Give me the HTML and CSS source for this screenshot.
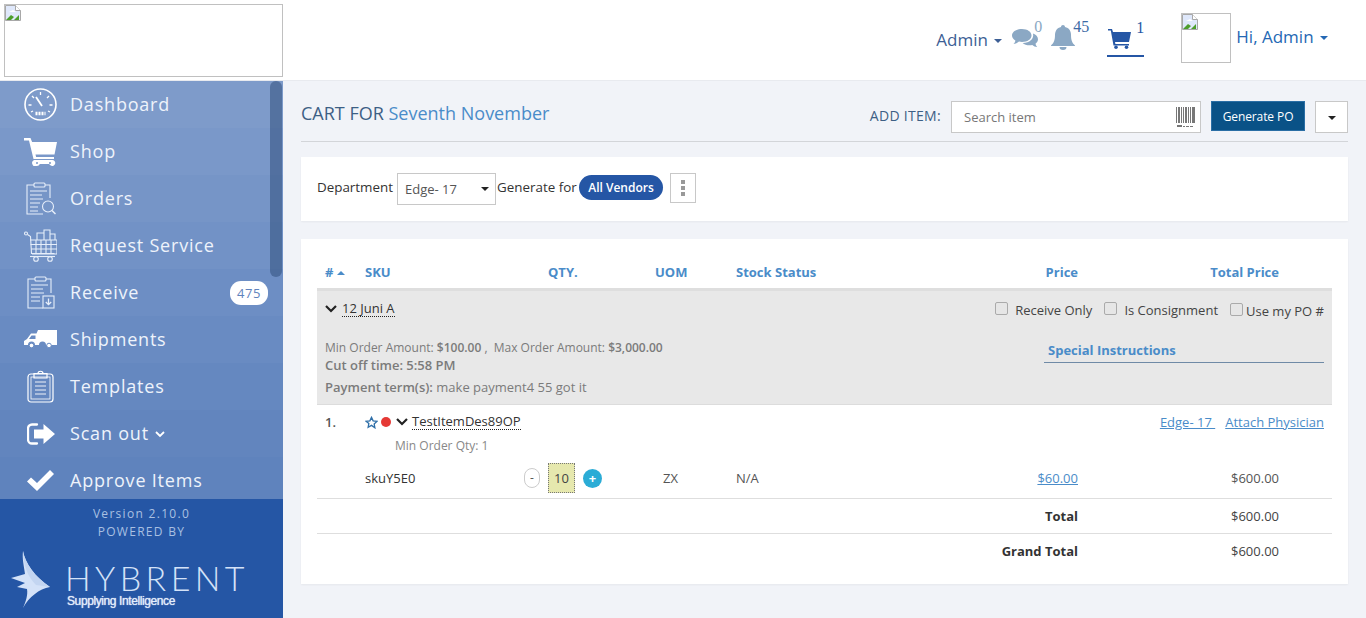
FILE: index.html
```html
<!DOCTYPE html>
<html lang="en">
  <head>
    <meta charset="UTF-8" />
    <title>Cart - Hybrent</title>
    <link rel="stylesheet" href="styles.css">
  </head>
  <body>
    <svg class="defs" width="0" height="0">
      <defs>
        <symbol id="broken" viewBox="0 0 16 16">
          <path d="M.5.5h10l5 5v10H.5z" fill="#dfe8fb" stroke="#a8a8a8"/>
          <path d="M10.5.5v5h5" fill="#fff" stroke="#a8a8a8"/>
          <path d="M1 15l5-5 3 2-3 3z" fill="#4d9e2c"/>
          <path d="M9 15l5-5v5z" fill="#4d9e2c"/>
          <path d="M4 7l4-2 3 2z" fill="#fff"/>
        </symbol>
      </defs>
    </svg>

    <header class="topbar">
      <div class="logo-box"><svg class="broken"><use href="#broken"/></svg></div>
      <div class="top-right">
        <a class="top-link admin-link">Admin <i class="caret"></i></a>
        <span class="top-icon chat-icon">
          <svg width="26" height="21" viewBox="0 0 26 21"><path d="M10 1c5.500 0 9.500 2.900 9.500 6.500S15.500 14 10 14c-1 0-2-.1-3-.4C5.500 15 3.500 15.700 1.500 16c1-1 1.700-2.200 1.900-3.600C1.300 11.200 0 9.500 0 7.500 0 3.900 4.500 1 10 1z" fill="#8ba8c4"/><path d="M21 5.500c3 1 5 3.200 5 5.800 0 1.800-1 3.400-2.500 4.500.2 1.300.8 2.400 1.700 3.300-1.900-.2-3.600-.9-4.900-2.100-.9.200-1.800.3-2.800.3-2.800 0-5.300-.9-6.900-2.400 6.400.2 11.700-3.600 10.400-9.400z" fill="#8ba8c4"/></svg>
          <span class="count">0</span>
        </span>
        <span class="top-icon bell-icon">
          <svg width="24" height="25" viewBox="0 0 24 25"><path d="M12 0c1.100 0 2 .9 2 2 4 .8 6 4 6 8 0 6 1.500 8 4 10.500V21H0v-.5C2.500 18 4 16 4 10c0-4 2-7.200 6-8 0-1.100.9-2 2-2z" fill="#8ba8c4"/><path d="M8.500 22h7a3.500 3 0 0 1-7 0z" fill="#8ba8c4"/></svg>
          <span class="count">45</span>
        </span>
        <span class="top-icon cart-link">
          <svg width="23" height="20" viewBox="0 0 23 20"><path d="M0 0h4l1 3h18l-2 10H7l.4 2H21v1.500H5.500L2.800 1.500H0z" fill="#2556a5"/><circle cx="8" cy="18.200" r="1.800" fill="#2556a5"/><circle cx="18.500" cy="18.200" r="1.800" fill="#2556a5"/></svg>
          <span class="count">1</span>
        </span>
        <div class="avatar-box"><svg class="broken"><use href="#broken"/></svg></div>
        <a class="top-link hi-link">Hi, Admin <i class="caret"></i></a>
      </div>
    </header>

    <div class="layout">
      <aside class="sidebar">
        <nav class="side-nav">
          <a class="nav-item">
            <span class="nav-icon"><svg width="33" height="33" viewBox="0 0 33 33" fill="none" stroke="#fff"><circle cx="16.500" cy="16.500" r="15.500" stroke-width="1.600"/><path d="M16.500 4v3M8 8l2 2M25 8l-2 2M4.500 17h3M25.500 17h3M7 24l2-1M26 24l-2-1" stroke-width="1.300"/><path d="M12 9l6 9" stroke-width="1.800"/><path d="M11.500 25.500h10" stroke-width="3.500" stroke-dasharray="2 1"/></svg></span>
            <span class="nav-label">Dashboard</span>
          </a>
          <a class="nav-item">
            <span class="nav-icon"><svg width="33" height="28" viewBox="0 0 33 28" fill="#fff"><path d="M0 0h6.500l1.600 4H33l-2.500 12.500H11.500l.6 2.500H30v2H9.500L5 2.500H0z"/><path d="M10 22h18a3 3 0 1 1-1.200 5.600c-.8-.4-1.300-1-1.600-1.600h-9.400c-.5 1.200-1.600 2-2.800 2a3 3 0 0 1-3-6zm3 2a1 1 0 1 0 0 2 1 1 0 0 0 0-2zm13 0a1 1 0 1 0 0 2 1 1 0 0 0 0-2z"/></svg></span>
            <span class="nav-label">Shop</span>
          </a>
          <a class="nav-item">
            <span class="nav-icon"><svg width="31" height="33" viewBox="0 0 31 33" fill="none" stroke="#e6eefa" stroke-width="1.100"><path d="M9 3H2v29h16M20 3h5v13"/><rect x="9" y="1" width="11" height="4" rx="1"/><path d="M5 9h17M5 13h12M5 17h13M5 21h10M5 25h8M5 29h8"/><circle cx="23" cy="24.500" r="5.500"/><path d="M27 28.500l3.500 3.500" stroke-width="1.500"/></svg></span>
            <span class="nav-label">Orders</span>
          </a>
          <a class="nav-item">
            <span class="nav-icon"><svg width="33" height="33" viewBox="0 0 33 33" fill="none" stroke="#e6eefa" stroke-width="1.100"><circle cx="2" cy="4.500" r="1.500"/><path d="M3.500 5.500l3 2 1 17h23"/><path d="M6 11h27v14H8M12 11v14M17 11v14M22 11v14M27 11v14M6.500 15.500H33M7 20H33"/><path d="M13 11V4h7v7M20 11V1h6v10M26 11V5h5v6"/><circle cx="12" cy="30" r="2.300"/><circle cx="26" cy="30" r="2.300"/><path d="M6 27.500h25"/></svg></span>
            <span class="nav-label">Request Service</span>
          </a>
          <a class="nav-item">
            <span class="nav-icon"><svg width="29" height="33" viewBox="0 0 29 33" fill="none" stroke="#e6eefa" stroke-width="1.100"><path d="M9 3H2v29h15M20 3h5v14"/><rect x="9" y="1" width="11" height="4" rx="1"/><path d="M5 9h17M5 13h12M5 17h13M5 21h9M5 25h9"/><rect x="17" y="20" width="11" height="12"/><path d="M22.500 22.500v6M19.800 26l2.700 2.700 2.700-2.700" stroke-width="1.300"/></svg></span>
            <span class="nav-label">Receive</span>
            <span class="nav-badge">475</span>
          </a>
          <a class="nav-item">
            <span class="nav-icon"><svg width="33" height="19" viewBox="0 0 33 19"><path d="M14 0h19v15H22a3.500 3.500 0 0 0-7 0h-4a3.500 3.500 0 0 0-7 0H0v-4l3-2 4-5.500h5.500zM7.500 5.500L5 9h6.500V5.500z" fill="#fff" fill-rule="evenodd"/><circle cx="7.500" cy="15.500" r="2.300" fill="#fff" stroke="#698bc2"/><circle cx="25" cy="15.500" r="2.300" fill="#fff" stroke="#698bc2"/></svg></span>
            <span class="nav-label">Shipments</span>
          </a>
          <a class="nav-item">
            <span class="nav-icon"><svg width="27" height="33" viewBox="0 0 27 33" fill="none" stroke="#fff" stroke-width="1.200"><rect x="1" y="4" width="25" height="28" rx="3"/><rect x="4" y="7" width="19" height="22" stroke-width=".8"/><path d="M7 3.500h13V8H7zM11 3.500c0-3 5-3 5 0"/><path d="M8 12h11M8 16h11M8 20h11M8 24h11" stroke-width=".9"/></svg></span>
            <span class="nav-label">Templates</span>
          </a>
          <a class="nav-item">
            <span class="nav-icon"><svg width="28" height="22" viewBox="0 0 28 22" fill="#fff"><path d="M10 1.500H5a4 4 0 0 0-4 4v11a4 4 0 0 0 4 4h5" fill="none" stroke="#fff" stroke-width="2.300" stroke-linecap="round"/><path d="M16.500 1L28 11 16.500 21v-5.500H7v-9h9.500z"/></svg></span>
            <span class="nav-label">Scan out</span>
            <svg class="nav-chevron" width="10" height="7" viewBox="0 0 10 7" fill="none" stroke="#fff" stroke-width="1.800"><path d="M1 1l4 4 4-4"/></svg>
          </a>
          <a class="nav-item">
            <span class="nav-icon"><svg width="27" height="21" viewBox="0 0 27 21" fill="#fff"><path d="M0 11.500l4-4 6 5.500L23 0l4 4L10 21z"/></svg></span>
            <span class="nav-label">Approve Items</span>
          </a>
        </nav>
        <div class="side-scroll"></div>
        <div class="side-footer">
          <div class="version">Version 2.10.0</div>
          <div class="powered">POWERED BY</div>
          <div class="brand">
            <svg class="brand-mark" width="39" height="57" viewBox="0 0 39 57">
              <path d="M12 0c2 12 12 26 27 36-11 2-21 10-27 21 3-7 5-13 4-19L6 36l8-4L0 27l14-4C13 15 11 8 12 0z" fill="#d4e2f8"/>
              <path d="M12 0c2 12 12 26 27 36l-14-2C17 26 12 14 12 0z" fill="#c3d5f1"/>
            </svg>
            <div class="brand-text">
              <div class="brand-name">HYBRENT</div>
              <div class="brand-sub">Supplying Intelligence</div>
            </div>
          </div>
        </div>
      </aside>

      <main class="content">
        <div class="page-head">
          <h1 class="page-title">CART FOR <span>Seventh November</span></h1>
          <div class="head-actions">
            <label class="add-label">ADD ITEM:</label>
            <div class="search-box">
              <input class="search-input" type="text" placeholder="Search item">
              <svg width="19" height="20" viewBox="0 0 19 20" fill="#777"><path d="M0 0h1v16H0zM2 0h2v16H2zM5 0h1v16H5zM7 0h1v16H7zM9 0h2v16H9zM12 0h1v16h-1zM14 0h1v16h-1zM16 0h3v16h-3zM1 18h5v2H1zM7 19h2v1H7zM10 19h3v1h-3zM14 19h3v1h-3z"/></svg>
            </div>
            <button class="po-btn">Generate PO</button>
            <button class="po-caret"><i class="caret dark"></i></button>
          </div>
        </div>

        <section class="panel filter-panel">
          <span>Department</span>
          <div class="select-box">Edge- 17 <i class="caret dark"></i></div>
          <span>Generate for</span>
          <span class="pill">All Vendors</span>
          <span class="dots"><i></i><i></i><i></i></span>
        </section>

        <section class="panel cart-panel">
          <div class="grid-row cart-head">
            <span># <i class="caret up"></i></span>
            <span>SKU</span>
            <span>QTY.</span>
            <span>UOM</span>
            <span>Stock Status</span>
            <span class="right">Price</span>
            <span class="right">Total Price</span>
          </div>

          <div class="vendor-block">
            <div class="vendor-top">
              <div class="vendor-name">
                <svg class="chev" width="12" height="8" viewBox="0 0 12 8" fill="none" stroke="#222" stroke-width="2.200"><path d="M1 1l5 5 5-5"/></svg>
                <span class="dotted">12 Juni A</span>
              </div>
              <div class="vendor-checks">
                <label><input type="checkbox"> Receive Only</label>
                <label><input type="checkbox"> Is Consignment</label>
                <label class="tight"><input type="checkbox"> Use my PO #</label>
              </div>
            </div>
            <div class="vendor-bottom">
              <div class="vendor-info">
                <div class="amounts">Min Order Amount: <b>$100.00</b> ,&nbsp; Max Order Amount: <b>$3,000.00</b></div>
                <div class="cutoff">Cut off time: 5:58 PM</div>
                <div class="terms"><b>Payment term(s):</b> make payment4 55 got it</div>
              </div>
              <div class="special">Special Instructions</div>
            </div>
          </div>

          <div class="item-block">
            <div class="item-top">
              <span class="item-num">1.</span>
              <svg class="star" width="13" height="13" viewBox="0 0 24 24" fill="none" stroke="#2f6fa8" stroke-width="2.400"><path d="M12 2.500l3 6.500 7 .9-5.100 4.800 1.300 7L12 17.300l-6.200 3.400 1.300-7L2 9.900 9 9z"/></svg>
              <i class="red-dot"></i>
              <svg class="chev" width="12" height="8" viewBox="0 0 12 8" fill="none" stroke="#222" stroke-width="2.200"><path d="M1 1l5 5 5-5"/></svg>
              <span class="dotted">TestItemDes89OP</span>
              <span class="item-links"><a>Edge- 17&nbsp;</a><a>Attach Physician</a></span>
            </div>
            <div class="min-qty">Min Order Qty: 1</div>
            <div class="grid-row item-row">
              <span></span>
              <span>skuY5E0</span>
              <span class="qty-cell">
                <span class="qty-minus">-</span>
                <span class="qty-val">10</span>
                <span class="qty-plus">+</span>
              </span>
              <span class="uom">ZX</span>
              <span>N/A</span>
              <span class="right"><a>$60.00</a></span>
              <span class="right">$600.00</span>
            </div>
          </div>

          <div class="grid-row total-row">
            <b class="total-label">Total</b>
            <span class="right">$600.00</span>
          </div>
          <div class="grid-row total-row grand">
            <b class="total-label">Grand Total</b>
            <span class="right">$600.00</span>
          </div>
        </section>
      </main>
    </div>
  </body>
</html>
```

FILE: styles.css
```css
* {
  margin: 0;
  padding: 0;
  box-sizing: border-box;
}

body {
  font-family: "Open Sans", sans-serif;
  font-size: 13px;
  width: 100vw;
  height: 100vh;
  overflow: hidden;
  background: #f1f3f8;
  color: #333;
  display: flex;
  flex-direction: column;
}

.defs {
  position: absolute;
}

.broken {
  display: block;
  width: 16px;
  height: 16px;
}

.caret {
  display: inline-block;
  width: 0;
  height: 0;
  border-left: 4px solid transparent;
  border-right: 4px solid transparent;
  border-top: 4px solid currentColor;
  vertical-align: middle;
}

.caret.dark {
  color: #222;
}

.caret.up {
  border-top: 0;
  border-bottom: 4px solid currentColor;
}

/* header */
.topbar {
  height: 81px;
  flex: none;
  background: white;
  border-bottom: 1px solid #e8eaef;
  display: flex;
  align-items: flex-start;
  justify-content: space-between;
  padding: 4px 38px 0 4px;
}

.logo-box {
  width: 279px;
  height: 73px;
  border: 1px solid #c0c0c0;
}

.top-right {
  display: flex;
  align-items: flex-start;
}

.top-link {
  font-size: 17px;
  line-height: 22px;
  white-space: nowrap;
}

.top-link .caret {
  margin-left: 2px;
}

.admin-link {
  color: #3d5f95;
  margin-top: 25px;
  margin-right: 10px;
}

.hi-link {
  color: #2468b4;
  margin-top: 22px;
  margin-left: 5px;
}

.top-icon {
  position: relative;
  display: block;
}

.top-icon .count {
  position: absolute;
  font-family: "Liberation Serif", serif;
  font-size: 16px;
  line-height: 16px;
  color: #8ba8c4;
}

.chat-icon {
  margin-top: 24px;
  margin-right: 14px;
  width: 25px;
}

.chat-icon .count {
  left: 22px;
  top: -9px;
}

.bell-icon {
  margin-top: 21px;
  width: 24px;
  margin-right: 32px;
}

.bell-icon .count {
  left: 22px;
  top: -6px;
  color: #3d6aa6;
}

.cart-link {
  margin-top: 25px;
  width: 37px;
  height: 28px;
  border-bottom: 2px solid #2556a5;
  margin-right: 37px;
  padding-left: 1px;
}

.cart-link .count {
  left: 29px;
  top: -9px;
  color: #2556a5;
}

.avatar-box {
  width: 50px;
  height: 50px;
  margin-top: 9px;
  border: 1px solid #c0c0c0;
}

/* layout */
.layout {
  flex: 1;
  display: flex;
  min-height: 0;
}

.sidebar {
  position: relative;
  width: 283px;
  flex: none;
  display: flex;
  flex-direction: column;
  background: #2556a5;
}

.side-nav {
  flex: 1;
  min-height: 0;
  overflow: hidden;
}

.nav-item {
  height: 47px;
  display: flex;
  align-items: center;
  color: #eef3fb;
  font-size: 18px;
  letter-spacing: 0.8px;
  padding: 0 15px 0 24px;
  background: #7e9bca;
}

.nav-item:nth-child(2) { background: #7a98c9; }
.nav-item:nth-child(3) { background: #7695c7; }
.nav-item:nth-child(4) { background: #7292c6; }
.nav-item:nth-child(5) { background: #6d8ec4; }
.nav-item:nth-child(6) { background: #698bc2; }
.nav-item:nth-child(7) { background: #6588c0; }
.nav-item:nth-child(8) { background: #6285be; }
.nav-item:nth-child(9) { background: #5f83bd; }

.nav-icon {
  width: 33px;
  margin-right: 13px;
  display: flex;
  justify-content: center;
  flex: none;
}

.nav-icon svg {
  display: block;
}

.nav-label {
  margin-bottom: 1px;
}

.nav-badge {
  margin-left: auto;
  background: white;
  color: #5f83bd;
  font-size: 13px;
  line-height: 24px;
  width: 38px;
  text-align: center;
  border-radius: 11px;
  letter-spacing: 0.5px;
}

.nav-chevron {
  margin-left: 6px;
  margin-top: 2px;
}

.side-scroll {
  position: absolute;
  top: 0;
  left: 270px;
  width: 12px;
  height: 196px;
  border-radius: 6px;
  background: rgba(50, 80, 125, 0.55);
}

.side-footer {
  height: 119px;
  flex: none;
  background: #2556a5;
  padding-top: 6px;
  text-align: center;
  color: #a9c0e2;
  font-size: 12px;
  letter-spacing: 1.3px;
  line-height: 18px;
}

.brand {
  display: flex;
  align-items: flex-start;
  padding: 10px 0 0 11px;
  text-align: left;
}

.brand-mark {
  flex: none;
}

.brand-text {
  margin-left: 15px;
  margin-top: 13px;
}

.brand-name {
  font-family: Lato, sans-serif;
  font-weight: 300;
  font-size: 34px;
  line-height: 28px;
  letter-spacing: 4.4px;
  color: #d4e2f8;
}

.brand-sub {
  font-family: "Liberation Sans", sans-serif;
  font-size: 12px;
  line-height: 14px;
  letter-spacing: -0.4px;
  color: #e4edfb;
  text-shadow: 0 0 1px #e4edfb;
  margin: 2px 0 0 2px;
}

/* content */
.content {
  flex: 1;
  min-width: 0;
  padding: 0 18px;
}

.page-head {
  height: 61px;
  border-bottom: 1px solid #d3d5d9;
  display: flex;
  align-items: flex-start;
  justify-content: space-between;
  padding-top: 20px;
}

.page-title {
  font-size: 18px;
  font-weight: 400;
  line-height: 24px;
  color: #3d5f85;
}

.page-title span {
  color: #4a8cc9;
}

.head-actions {
  display: flex;
  align-items: flex-start;
}

.add-label {
  font-size: 14px;
  letter-spacing: 0.3px;
  color: #3d5f85;
  margin: 5px 10px 0 0;
}

.search-box {
  width: 250px;
  height: 32px;
  border: 1px solid #c8c8c8;
  background: white;
  display: flex;
  align-items: center;
  padding: 0 5px 0 12px;
  margin-right: 10px;
}

.search-input {
  flex: 1;
  min-width: 0;
  border: 0;
  outline: 0;
  background: none;
  font-family: inherit;
  font-size: 13px;
  color: #555;
}

.search-input::placeholder {
  color: #777;
}

.po-btn {
  width: 94px;
  height: 30px;
  background: #0a5287;
  border: 1px solid #2a6ea5;
  color: white;
  font-family: inherit;
  font-size: 12px;
  font-weight: 500;
  letter-spacing: -0.1px;
  margin-right: 10px;
}

.po-caret {
  width: 33px;
  height: 32px;
  background: white;
  border: 1px solid #c8c8c8;
}

.panel {
  background: white;
  box-shadow: 0 1px 2px rgba(0, 0, 0, 0.05);
}

.filter-panel {
  height: 64px;
  margin-top: 15px;
  display: flex;
  align-items: center;
  padding: 0 16px 4px;
  font-size: 13.4px;
  color: #333;
}

.select-box {
  width: 99px;
  height: 32px;
  border: 1px solid #c8c8c8;
  margin: 4px 1px 0 4px;
  display: flex;
  align-items: center;
  justify-content: space-between;
  padding: 0 6px 0 7px;
  color: #555;
  font-size: 13px;
}

.pill {
  background: #2556a5;
  color: white;
  font-size: 12px;
  font-weight: 600;
  line-height: 25px;
  padding: 0 9.5px;
  border-radius: 13px;
  margin: 0 7px 0 2px;
}

.dots {
  width: 26px;
  height: 30px;
  margin-top: 2px;
  border: 1px solid #c8c8c8;
  display: flex;
  flex-direction: column;
  align-items: center;
  justify-content: center;
  gap: 2px;
}

.dots i {
  width: 4px;
  height: 4px;
  background: #999;
}

.cart-panel {
  margin-top: 18px;
  height: 345px;
  padding: 16px;
}

.grid-row {
  display: grid;
  grid-template-columns: 40px 183px 107px 81px 200px 142px 201px 53px;
  padding-left: 8px;
}

.right {
  text-align: right;
}

.cart-head {
  height: 36px;
  align-items: center;
  font-weight: 700;
  color: #4a8cc9;
  font-size: 13px;
  border-bottom: 3px solid #dedede;
}

.cart-head .up {
  vertical-align: 2px;
}

.vendor-block {
  height: 114px;
  background: #e8e8e8;
  border-bottom: 1px solid #dcdcdc;
  padding: 9px 8px 0;
  color: #7b7b7b;
}

.vendor-top {
  display: flex;
  justify-content: space-between;
  color: #333;
}

.vendor-name {
  display: flex;
  align-items: center;
  gap: 5px;
  height: 17px;
}

.dotted {
  border-bottom: 1px dotted #222;
  line-height: 15px;
  color: #333;
}

.vendor-checks {
  display: flex;
  gap: 12px;
  color: #444;
}

.vendor-checks label {
  display: flex;
  align-items: center;
  height: 20px;
  gap: 7px;
}

.vendor-checks label.tight {
  gap: 3px;
  margin-top: 1px;
}

.vendor-checks input {
  appearance: none;
  width: 13px;
  height: 13px;
  border: 1px solid #aaa;
  border-radius: 2px;
  background: #e6e6e6;
  margin-top: -3px;
}

.vendor-bottom {
  display: flex;
  justify-content: space-between;
  margin-top: 18px;
}

.amounts {
  font-size: 12px;
  line-height: 18px;
}

.amounts b {
  font-weight: 600;
}

.cutoff {
  font-weight: 600;
  line-height: 18px;
  margin-top: -1px;
}

.terms {
  line-height: 18px;
  margin-top: 4px;
}

.terms b {
  font-weight: 600;
}

.special {
  width: 280px;
  height: 22px;
  font-weight: 700;
  color: #4a8cc9;
  line-height: 18px;
  padding-left: 4px;
  border-bottom: 1px solid #6f8aa6;
  margin-top: 2px;
}

.item-block {
  border-bottom: 1px solid #dedede;
  height: 94px;
  padding-top: 8px;
}

.item-top {
  display: flex;
  align-items: center;
  height: 18px;
  padding: 0 8px;
}

.item-num {
  width: 40px;
  font-weight: 600;
  color: #555;
}

.star {
  margin-right: 3px;
}

.red-dot {
  width: 10px;
  height: 10px;
  border-radius: 50%;
  background: #e53935;
  margin-right: 5px;
}

.item-top .chev {
  margin-right: 4px;
}

.item-links {
  margin-left: auto;
  display: flex;
  gap: 10px;
}

.item-links a,
.item-row a {
  color: #4a8cc9;
  text-decoration: underline;
}

.min-qty {
  font-size: 12px;
  color: #888;
  line-height: 16px;
  padding-left: 78px;
  margin-top: 7px;
}

.item-row {
  align-items: center;
  height: 30px;
  margin-top: 9px;
  color: #555;
}

.item-row > span:nth-child(2) {
  color: #333;
}

.qty-cell {
  display: flex;
  align-items: center;
  margin-left: -24px;
}

.qty-minus {
  width: 16px;
  height: 20px;
  border: 1px solid #ccc;
  border-radius: 8px;
  text-align: center;
  line-height: 18px;
  font-size: 12px;
  margin-right: 8px;
}

.qty-val {
  width: 27px;
  height: 30px;
  background: #e6e8ae;
  border: 1px dotted #777;
  text-align: center;
  line-height: 28px;
  color: #444;
  margin-right: 8px;
}

.qty-plus {
  width: 19px;
  height: 19px;
  background: #2bacd6;
  color: white;
  border-radius: 50%;
  text-align: center;
  line-height: 18px;
  font-weight: 700;
}

.uom {
  padding-left: 8px;
}

.total-row {
  height: 35px;
  align-items: center;
  border-bottom: 1px solid #dedede;
  grid-template-columns: 753px 201px 53px;
}

.total-row.grand {
  height: 33px;
  border-bottom: 0;
}

.total-label {
  text-align: right;
  color: #333;
  font-weight: 700;
}

.total-row .right {
  color: #444;
}
```
